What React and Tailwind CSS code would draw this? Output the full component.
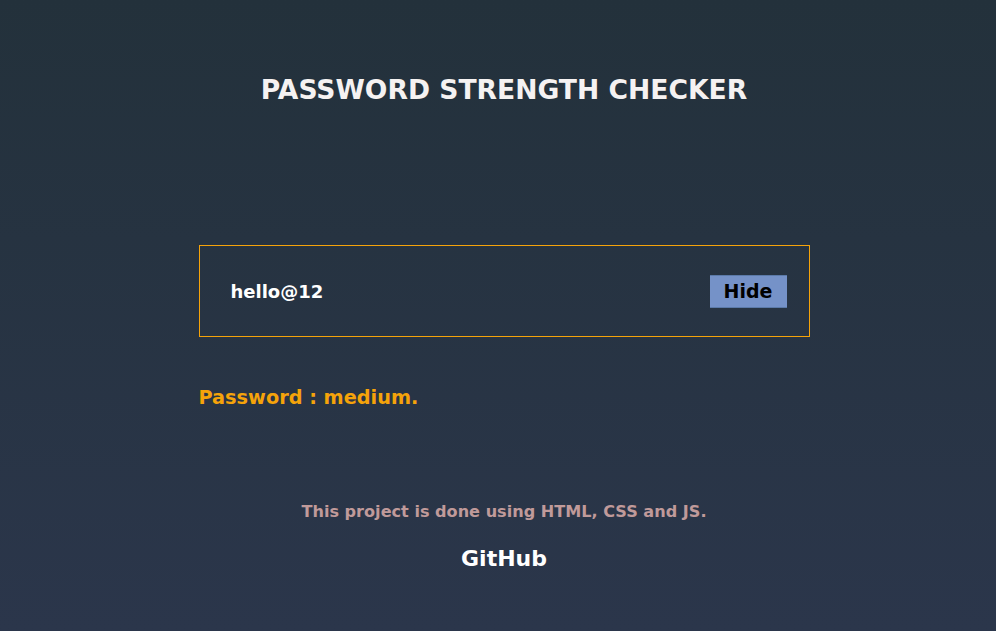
export default function App() {
  return (
    <div
      className="min-h-[631px] w-full bg-gradient-to-b from-[#23313b] to-[#2b364b] flex flex-col items-center pl-[12px]"
      style={{ fontFamily: '"DejaVu Sans", "Open Sans", sans-serif' }}
    >
      <h1 className="mt-[72px] text-[26.6px] leading-[36px] font-bold text-[#f5f2f2]">
        PASSWORD STRENGTH CHECKER
      </h1>
      <div className="mt-[137px] w-[611px]">
        <div className="h-[92px] border border-[#f5a30a] flex items-center justify-between pl-[31px] pr-[22px]">
          <span className="text-[18px] font-bold text-white">hello@12</span>
          <button className="w-[77px] h-[33px] bg-[#7592c8] border-y border-[#5b7aa9] text-[19px] font-bold text-black flex items-center justify-center">
            Hide
          </button>
        </div>
        <p className="mt-[46px] text-[19.3px] leading-[30px] font-bold text-[#f5a30a]">
          Password : medium.
        </p>
      </div>
      <p className="mt-[87px] text-[16.1px] font-bold text-[#c09a9a]">
        This project is done using HTML, CSS and JS.
      </p>
      <p className="mt-[18px] text-[22px] font-bold text-white">GitHub</p>
    </div>
  );
}
